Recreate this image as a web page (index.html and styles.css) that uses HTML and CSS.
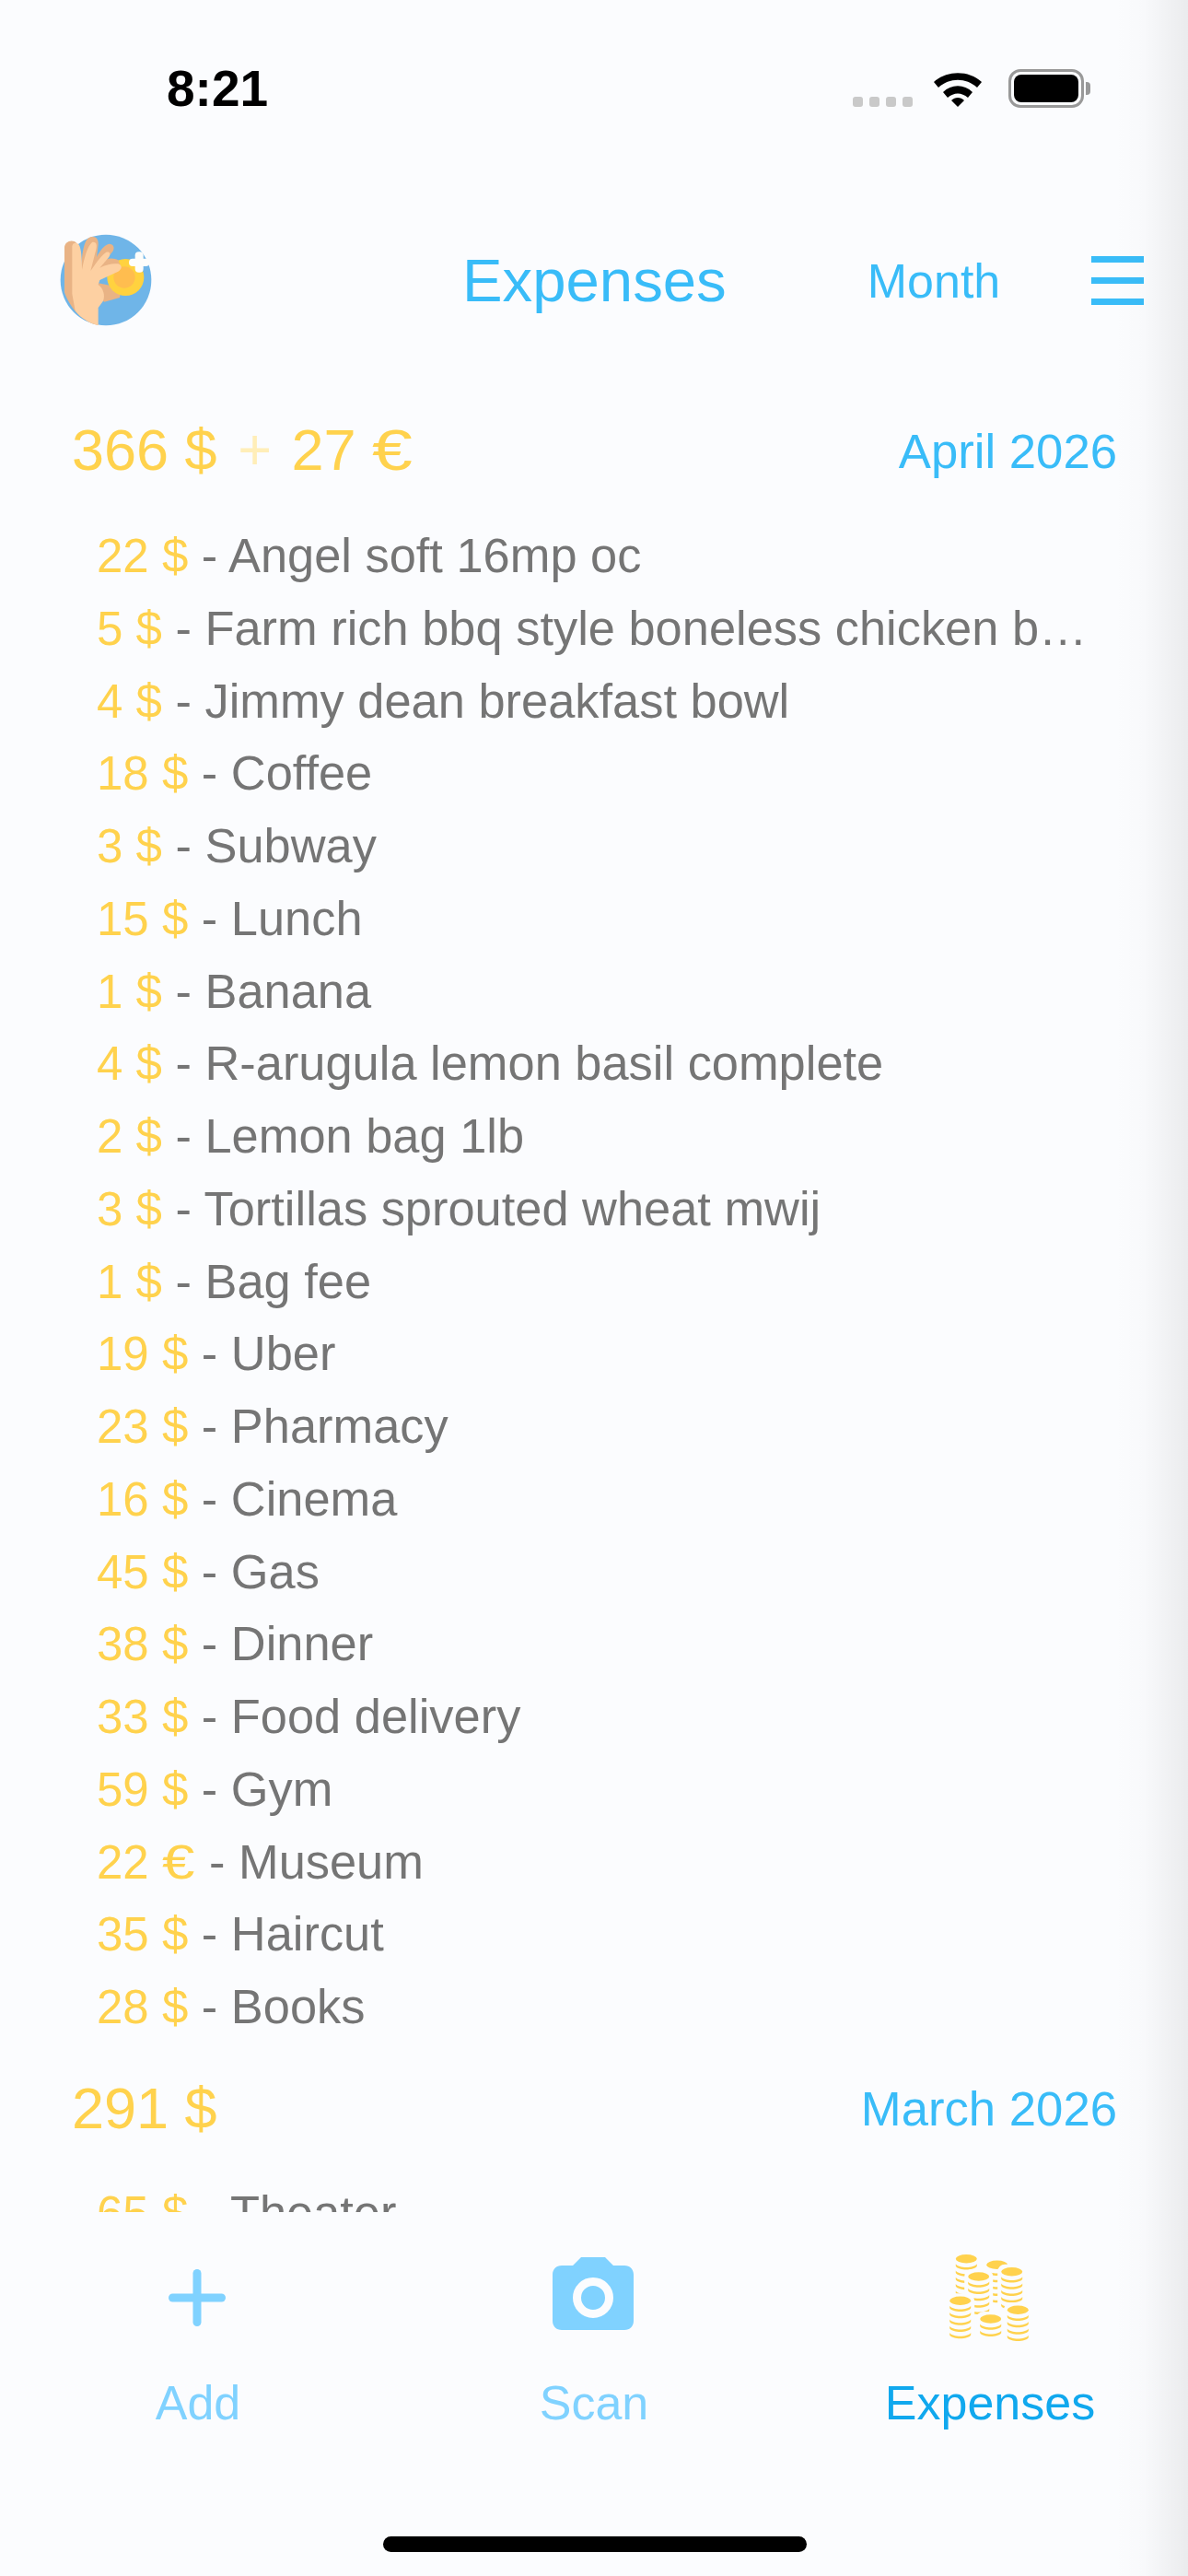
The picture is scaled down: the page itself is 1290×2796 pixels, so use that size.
FILE: index.html
```html
<!DOCTYPE html>
<html lang="en">
<head>
    <meta charset="UTF-8">
    <title>Expenses</title>
    <link rel="stylesheet" href="styles.css">
</head>
<body>
    <div class="phone">
        <div class="status-bar">
            <span class="clock">8:21</span>
            <div class="status-icons">
                <div class="signal"><i></i><i></i><i></i><i></i></div>
                <svg class="wifi" width="56" height="42" viewBox="0 0 56 42">
                    <path d="M2 14 C16 1 40 1 54 14 L49 20 C37 9 19 9 7 20 Z" fill="#000"/>
                    <path d="M12 25 C21 16 35 16 44 25 L39 31 C32 25 24 25 17 31 Z" fill="#000"/>
                    <path d="M21 34 C25 30 31 30 35 34 L28 41 Z" fill="#000"/>
                </svg>
                <div class="battery"><div class="battery-level"></div></div>
                <div class="battery-cap"></div>
            </div>
        </div>

        <header class="app-header">
            <!-- coordinates are from the 3x crop of the logo -->
            <svg class="logo" width="100" height="100" viewBox="0 15 300 300">
                <circle cx="150" cy="165" r="148" fill="#6fb5e8"/>
                <path d="M125 175 L200 190 L195 222 L145 236 L125 220 Z" fill="#e9b385"/>
                <circle cx="214" cy="156" r="60" fill="#ffd23f"/>
                <circle cx="210" cy="156" r="35" fill="#ffbd4f"/>
                <path d="M15 60 C15 40 40 30 55 45 L60 130 L125 312 C75 302 35 260 15 205 Z" fill="#e9b385"/>
                <path d="M70 130 C72 70 80 30 100 25 C115 20 127 30 125 50 L120 90 C130 70 145 50 160 47 C175 47 180 60 172 72 L150 98 C165 92 180 95 190 100 L200 125 L100 150 Z" fill="#e9b385"/>
                <path d="M40 55 C42 42 55 42 62 50 C70 60 72 100 72 132 C80 90 90 55 105 42 C118 38 122 50 118 65 L100 135 C115 115 130 90 150 75 C160 70 168 78 160 90 L130 125 C150 115 170 110 190 112 C205 118 202 130 190 137 L130 165 L125 180 C140 190 150 215 140 235 L125 255 V312 C95 305 70 290 50 265 L40 210 Z" fill="#fdd0a2"/>
                <rect x="245" y="73" width="27" height="67" rx="12" fill="#fdfdfb"/>
                <rect x="225" y="95" width="67" height="25" rx="12" fill="#fdfdfb"/>
            </svg>
            <h1 class="app-title">Expenses</h1>
            <span class="period-btn">Month</span>
            <div class="menu-btn"><i></i><i></i><i></i></div>
        </header>

        <main class="scroll">
            <section class="month">
                <div class="month-head">
                    <div class="month-total">366 $ <span class="plus">+</span> 27 <span class="euro">€</span></div>
                    <div class="month-name">April 2026</div>
                </div>
                <ul class="items">
                    <li><b>22 $</b> - Angel soft 16mp oc</li>
                    <li><b>5 $</b> - Farm rich bbq style boneless chicken b…</li>
                    <li><b>4 $</b> - Jimmy dean breakfast bowl</li>
                    <li><b>18 $</b> - Coffee</li>
                    <li><b>3 $</b> - Subway</li>
                    <li><b>15 $</b> - Lunch</li>
                    <li><b>1 $</b> - Banana</li>
                    <li><b>4 $</b> - R-arugula lemon basil complete</li>
                    <li><b>2 $</b> - Lemon bag 1lb</li>
                    <li><b>3 $</b> - Tortillas sprouted wheat mwij</li>
                    <li><b>1 $</b> - Bag fee</li>
                    <li><b>19 $</b> - Uber</li>
                    <li><b>23 $</b> - Pharmacy</li>
                    <li><b>16 $</b> - Cinema</li>
                    <li><b>45 $</b> - Gas</li>
                    <li><b>38 $</b> - Dinner</li>
                    <li><b>33 $</b> - Food delivery</li>
                    <li><b>59 $</b> - Gym</li>
                    <li><b>22 <span class="euro">€</span></b> - Museum</li>
                    <li><b>35 $</b> - Haircut</li>
                    <li><b>28 $</b> - Books</li>
                </ul>
            </section>
            <section class="month">
                <div class="month-head">
                    <div class="month-total">291 $</div>
                    <div class="month-name">March 2026</div>
                </div>
                <ul class="items">
                    <li><b>65 $</b> - Theater</li>
                </ul>
            </section>
        </main>

        <nav class="tabs">
            <div class="tab">
                <svg class="tab-icon" width="90" height="102" viewBox="0 0 90 102">
                    <rect x="39.500" y="22" width="9" height="62" rx="4.500" fill="#80d2ff"/>
                    <rect x="13" y="48.500" width="62" height="9" rx="4.500" fill="#80d2ff"/>
                </svg>
                <span class="tab-label">Add</span>
            </div>
            <div class="tab">
                <svg class="tab-icon" width="90" height="102" viewBox="0 0 90 102">
                    <path d="M31 9 H57 L66 18 H78 C84 18 88 22 88 28 V78 C88 84 84 88 78 88 H10 C4 88 0 84 0 78 V28 C0 22 4 18 10 18 H22 Z" fill="#80d2ff"/>
                    <circle cx="44" cy="53" r="17.500" fill="none" stroke="#fbfcfe" stroke-width="9"/>
                </svg>
                <span class="tab-label">Scan</span>
            </div>
            <div class="tab active">
                <svg class="tab-icon" width="90" height="102" viewBox="0 0 90 102">
                    <defs>
                        <path id="ring" d="M-11.500 0 C-8 5 8 5 11.500 0 V2.500 C8 7.500 -8 7.500 -11.500 2.500 Z" fill="#ffd24d"/>
                        <g id="coins2">
                            <rect x="-15.500" y="-8" width="31" height="30" rx="8" fill="#fbfcfe"/>
                            <ellipse rx="11.500" ry="4.700" fill="#ffd24d"/>
                            <use href="#ring" y="5.500"/>
                            <use href="#ring" y="12.800"/>
                        </g>
                        <g id="coins4">
                            <rect x="-15.500" y="-8" width="31" height="45" rx="8" fill="#fbfcfe"/>
                            <ellipse rx="11.500" ry="4.700" fill="#ffd24d"/>
                            <use href="#ring" y="5.500"/>
                            <use href="#ring" y="12.800"/>
                            <use href="#ring" y="20.100"/>
                            <use href="#ring" y="27.400"/>
                        </g>
                        <g id="coins5">
                            <rect x="-15.500" y="-8" width="31" height="54" rx="8" fill="#fbfcfe"/>
                            <ellipse rx="11.500" ry="4.700" fill="#ffd24d"/>
                            <use href="#ring" y="5.500"/>
                            <use href="#ring" y="12.800"/>
                            <use href="#ring" y="20.100"/>
                            <use href="#ring" y="27.400"/>
                            <use href="#ring" y="34.700"/>
                        </g>
                    </defs>
                    <use href="#coins5" x="19.300" y="10.700"/>
                    <use href="#coins5" x="52.700" y="17.300"/>
                    <use href="#coins5" x="32.700" y="30"/>
                    <use href="#coins5" x="68.700" y="24.700"/>
                    <use href="#coins5" x="12.700" y="56.300"/>
                    <use href="#coins2" x="45.700" y="76"/>
                    <use href="#coins4" x="75.300" y="66.300"/>
                </svg>
                <span class="tab-label">Expenses</span>
            </div>
        </nav>

        <div class="home-bar"><div class="home-indicator"></div></div>
        <div class="edge-shade"></div>
    </div>
</body>
</html>
```

FILE: styles.css
```css
body {
	margin: 0;
	padding: 0;
	background-color: #fbfcfe;
	font-family: "Liberation Sans", Arial, sans-serif;
}

.phone {
	position: relative;
	width: 1290px;
	height: 2796px;
	display: flex;
	flex-direction: column;
	overflow: hidden;
	background: #fbfcfe;
}

/* status bar */
.status-bar {
	height: 190px;
	flex-shrink: 0;
	display: flex;
	justify-content: space-between;
	align-items: flex-start;
	padding: 61px 106px 0 181px;
	box-sizing: border-box;
}

.clock {
	font-size: 55px;
	line-height: 70px;
	font-weight: 700;
	color: #000;
}

.status-icons {
	display: flex;
	align-items: flex-end;
	margin-top: 14px;
}

.signal {
	display: flex;
	gap: 7px;
	margin-right: 21px;
	margin-bottom: 1px;
}

.signal i {
	width: 11px;
	height: 11px;
	border-radius: 3px;
	background: #c9c9c9;
}

.wifi {
	margin-right: 27px;
}

.battery {
	width: 82px;
	height: 42px;
	box-sizing: border-box;
	border: 3px solid #999;
	border-radius: 13px;
	padding: 3px;
}

.battery-level {
	height: 100%;
	background: #000;
	border-radius: 8px;
}

.battery-cap {
	width: 5px;
	height: 14px;
	margin: 0 0 14px 2px;
	background: #999;
	border-radius: 0 4px 4px 0;
}

/* header */
.app-header {
	height: 100px;
	flex-shrink: 0;
	display: flex;
	align-items: center;
	padding: 0 48px 0 65px;
	margin-top: 64px;
}

.logo {
	flex-shrink: 0;
}

.app-title {
	margin: 0 0 0 337px;
	font-size: 65.300px;
	font-weight: 400;
	color: #39bcf8;
}

.period-btn {
	margin-left: 153px;
	padding-top: 2px;
	font-size: 52px;
	color: #39bcf8;
}

.menu-btn {
	margin-left: 99px;
	width: 59px;
	height: 53px;
	display: flex;
	flex-direction: column;
	justify-content: space-between;
}

.menu-btn i {
	height: 7px;
	background: #39bcf8;
}

/* list */
.scroll {
	flex: 1;
	min-height: 0;
	overflow: hidden;
	padding: 66px 77px 0 78px;
}

.month-head {
	display: flex;
	justify-content: space-between;
	align-items: center;
	padding-top: 28px;
	height: 80px;
	margin-bottom: 36px;
}

.month + .month {
	padding-top: 2px;
}

.month + .month .month-head {
	margin-bottom: 35px;
}

.month-total {
	font-size: 63px;
	color: #ffd24d;
}

.plus {
	margin: 0 4px 0 5px;
	color: #ffeeb8;
}

.euro {
	display: inline-block;
	transform: scaleX(1.25);
	transform-origin: left;
	margin-right: 0.16em;
}

.month-name {
	padding-top: 2px;
	font-size: 52.700px;
	color: #39bcf8;
}

.items {
	margin: 0;
	padding: 0 0 0 27px;
	list-style: none;
}

.items li {
	height: 78.750px;
	line-height: 78.750px;
	font-size: 52.400px;
	color: #757575;
	white-space: nowrap;
}

.items b {
	font-size: 51px;
	font-weight: 400;
	color: #ffd24d;
}

/* tabs */
.tabs {
	height: 275px;
	flex-shrink: 0;
	display: flex;
	background: #fbfcfe;
}

.tab {
	flex: 1;
	display: flex;
	flex-direction: column;
	align-items: center;
	font-size: 52px;
	color: #80d2ff;
}

.tab-icon {
	margin-top: 40px;
	margin-bottom: 35px;
}

.tab-label {
	line-height: 60px;
}

.tab.active {
	color: #10a8ee;
}

/* home indicator */
.home-bar {
	height: 120px;
	flex-shrink: 0;
	display: flex;
	justify-content: center;
	align-items: flex-start;
	padding-top: 77px;
	box-sizing: border-box;
}

.home-indicator {
	width: 460px;
	height: 17px;
	border-radius: 9px;
	background: #000;
	margin-left: 2px;
}

/* shadow of the next screen along the right edge */
.edge-shade {
	position: absolute;
	top: 0;
	right: 0;
	bottom: 0;
	width: 80px;
	background: linear-gradient(to right, rgba(0,0,0,0), rgba(0,0,0,0.012) 40%, rgba(0,0,0,0.065));
}
```
